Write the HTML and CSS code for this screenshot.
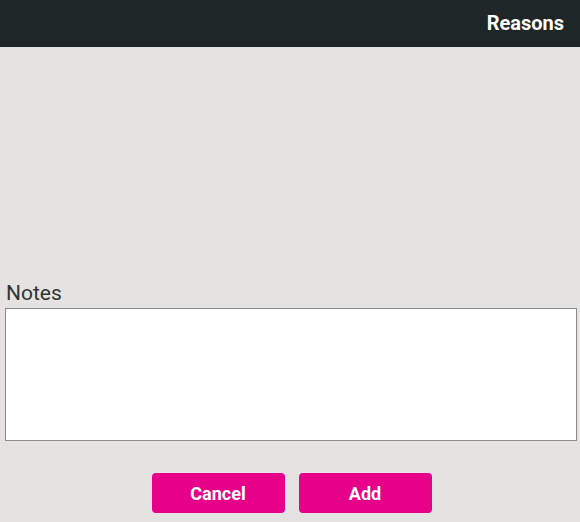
FILE: index.html
```html
<!DOCTYPE html>
<html>
<head>
<meta charset="utf-8">
<link rel="stylesheet" href="styles.css">
</head>
<body>
<header class="topbar"><span class="title">Reasons</span></header>
<main class="content">
  <div class="spacer"></div>
  <label class="notes-label" for="notes">Notes</label>
  <textarea id="notes" class="notes"></textarea>
  <div class="actions">
    <button class="btn">Cancel</button>
    <button class="btn">Add</button>
  </div>
</main>
</body>
</html>
```

FILE: styles.css
```css
html, body {
  margin: 0;
  padding: 0;
  height: 100%;
}
body {
  background: #e5e3e1;
  font-family: Roboto, "Liberation Sans", sans-serif;
}
.topbar {
  height: 47px;
  background: #1f2628;
  display: flex;
  align-items: center;
  justify-content: flex-end;
  padding: 0 16px 2px;
  box-sizing: border-box;
}
.title {
  color: #fff;
  font-weight: 700;
  font-size: 20px;
}
.content {
  display: flex;
  flex-direction: column;
  padding: 0 3px 0 5px;
}
.spacer {
  height: 234px;
}
.notes-label {
  font-size: 21px;
  color: #333;
  line-height: 25px;
  margin-left: 1px;
}
.notes {
  box-sizing: border-box;
  height: 133px;
  margin: 2px 0 0;
  border: 1px solid #8a8a8a;
  background: #fff;
  resize: none;
  display: block;
}
.actions {
  display: flex;
  justify-content: center;
  gap: 14px;
  margin-top: 32px;
  padding-left: 1px;
}
.btn {
  width: 133px;
  height: 40px;
  border: none;
  border-radius: 4px;
  background: #e6008a;
  color: #fff;
  font-family: Roboto, "Liberation Sans", sans-serif;
  font-weight: 700;
  font-size: 18px;
}
```
